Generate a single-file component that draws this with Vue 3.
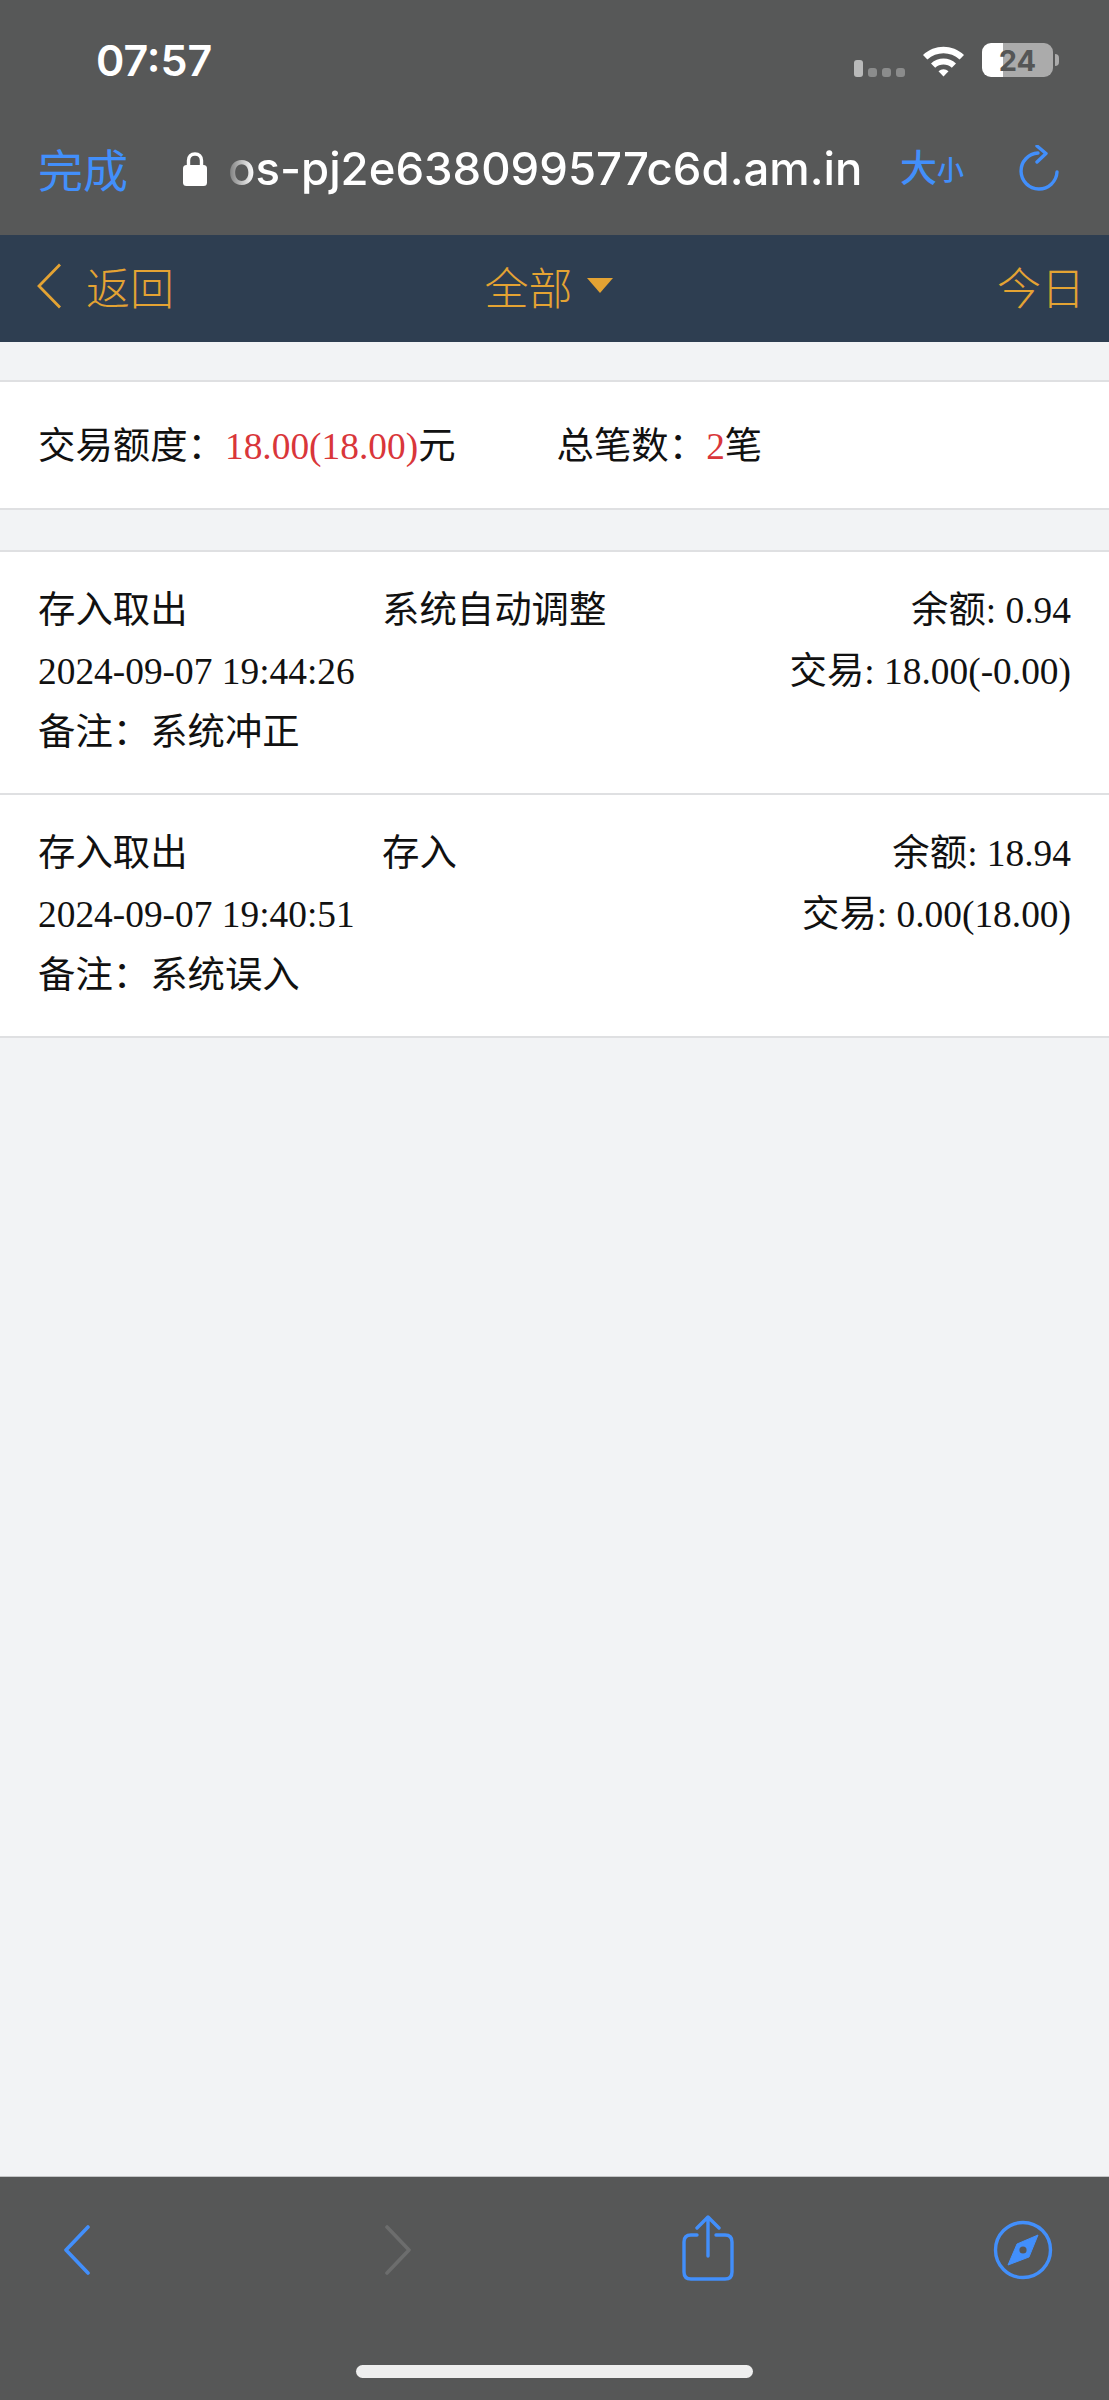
<template>
  <div class="screen">
    <header class="browser-top">
      <div class="status">
        <span class="status__time">07:57</span>
        <div class="status__icons">
          <span class="signal">
            <i class="signal__on"></i><i></i><i></i><i></i>
          </span>
          <svg class="wifi" viewBox="0 0 43 33">
            <path d="M1 11C12.500 0 30.500 0 42 11L37.600 15.600C28.500 7.200 14.500 7.200 5.400 15.600Z" fill="#fff" />
            <path d="M9 19.500C15.800 12.900 27.200 12.900 34 19.500L29.800 23.700C25.200 19.300 17.800 19.300 13.200 23.700Z" fill="#fff" />
            <path d="M16.500 27.300C19.600 24.500 23.400 24.500 26.500 27.300L21.500 32.500Z" fill="#fff" />
          </svg>
          <span class="battery"><span class="battery__text">24</span></span>
          <span class="battery__tip"></span>
        </div>
      </div>
      <div class="address">
        <span class="address__done">完成</span>
        <svg class="lock" viewBox="0 0 26 36">
          <path d="M6.500 16V9.500C6.500 5.500 9 3 13 3S19.500 5.500 19.500 9.500V16" fill="none" stroke="#fff" stroke-width="3.400" />
          <rect x="1" y="14" width="24" height="21" rx="3.500" fill="#fff" />
        </svg>
        <span class="address__url">os-pj2e638099577c6d.am.in</span>
        <span class="address__size">大<small>小</small></span>
        <svg class="reload" viewBox="0 0 40 48">
          <path d="M19 8A18 18 0 1 0 38 27" fill="none" stroke="#428ffb" stroke-width="3.400" stroke-linecap="round" />
          <path d="M18 1L27 8.500L18 17" fill="none" stroke="#428ffb" stroke-width="3.400" stroke-linecap="round" stroke-linejoin="round" />
        </svg>
      </div>
    </header>

    <nav class="nav">
      <div class="nav__back">
        <svg class="nav__chevron" viewBox="0 0 26 46">
          <path d="M24 1.500L3 23L24 44.500" fill="none" stroke="#e4a333" stroke-width="2.800" />
        </svg>
        <span>返回</span>
      </div>
      <div class="nav__title">
        <span>全部</span>
        <i class="nav__caret"></i>
      </div>
      <span class="nav__today">今日</span>
    </nav>

    <main class="content">
      <section class="summary">
        <p class="summary__item">
          交易额度：<span class="red">18.00(18.00)</span>元
        </p>
        <p class="summary__item">
          总笔数：<span class="red">2</span>笔
        </p>
      </section>

      <section class="records">
        <article v-for="(item, index) in records" :key="index" class="record">
          <div class="record__line">
            <span class="record__type">{{ item.type }}</span>
            <span class="record__action">{{ item.action }}</span>
            <span class="record__right">余额: {{ item.balance }}</span>
          </div>
          <div class="record__line">
            <span>{{ item.time }}</span>
            <span class="record__right">交易: {{ item.trade }}</span>
          </div>
          <div class="record__line">
            <span>备注：</span><span>{{ item.note }}</span>
          </div>
        </article>
      </section>
    </main>

    <footer class="browser-bottom">
      <div class="toolbar">
        <svg class="tool tool--chevron" viewBox="0 0 28 50">
          <path d="M25 2L3 25L25 48" fill="none" stroke="#428ffb" stroke-width="3.600" stroke-linecap="round" stroke-linejoin="round" />
        </svg>
        <svg class="tool tool--chevron tool--forward" viewBox="0 0 28 50">
          <path d="M3 2L25 25L3 48" fill="none" stroke="#6c6d6d" stroke-width="3.600" stroke-linecap="round" stroke-linejoin="round" />
        </svg>
        <svg class="tool tool--share" viewBox="0 0 52 66">
          <path d="M15 20H9C4.500 20 2 22.500 2 27V57C2 61.500 4.500 64 9 64H43C47.500 64 50 61.500 50 57V27C50 22.500 47.500 20 43 20H34" fill="none" stroke="#428ffb" stroke-width="3.400" stroke-linecap="round" />
          <path d="M26 41V2M15 13L26 2L37 13" fill="none" stroke="#428ffb" stroke-width="3.400" stroke-linecap="round" stroke-linejoin="round" />
        </svg>
        <svg class="tool tool--compass" viewBox="0 0 60 60">
          <circle cx="30" cy="30" r="27.500" fill="none" stroke="#428ffb" stroke-width="3.400" />
          <path d="M45 15L36 37L15 45L24 24Z" fill="#428ffb" stroke="#428ffb" stroke-width="1" stroke-linejoin="round" />
          <circle cx="30" cy="30" r="3.600" fill="#565757" />
        </svg>
      </div>
      <div class="home-bar"></div>
    </footer>
  </div>
</template>

<script setup>
const records = [
  {
    type: '存入取出',
    action: '系统自动调整',
    balance: '0.94',
    time: '2024-09-07 19:44:26',
    trade: '18.00(-0.00)',
    note: '系统冲正',
  },
  {
    type: '存入取出',
    action: '存入',
    balance: '18.94',
    time: '2024-09-07 19:40:51',
    trade: '0.00(18.00)',
    note: '系统误入',
  },
]
</script>

<style>
html,
body {
  margin: 0;
  background: #f2f3f5;
}
</style>

<style scoped>
.screen {
  display: flex;
  flex-direction: column;
  height: 2400px;
  overflow: hidden;
  font-family: "Liberation Serif", "Noto Sans CJK SC", serif;
  font-size: 37.4px;
  color: #111;
}

.browser-top {
  height: 235px;
  flex: none;
  background: #575858;
  color: #fff;
  font-family: Inter, "Noto Sans CJK SC", sans-serif;
}

.status {
  display: flex;
  align-items: center;
  justify-content: space-between;
  height: 120px;
  padding: 0 50px 0 96px;
}

.status__time {
  font-size: 43px;
  font-weight: 600;
}

.status__icons {
  display: flex;
  align-items: center;
}

.signal {
  display: flex;
  align-items: flex-end;
  gap: 5px;
  height: 33px;
  margin-right: 17px;
}

.signal i {
  width: 9px;
  height: 9px;
  border-radius: 3px;
  background: #8b8c8c;
}

.signal .signal__on {
  height: 17px;
  background: #b9baba;
}

.wifi {
  width: 43px;
  height: 33px;
  margin-right: 17px;
}

.battery {
  display: flex;
  align-items: center;
  justify-content: center;
  width: 71px;
  height: 34px;
  border-radius: 9px;
  background: linear-gradient(90deg, #fff 0 21px, #ababab 21px);
  color: #555656;
  font-size: 29px;
  font-weight: 700;
}

.battery__tip {
  width: 4px;
  height: 12px;
  margin-left: 2px;
  border-radius: 0 6px 6px 0;
  background: #ababab;
}

.address {
  display: flex;
  align-items: center;
  height: 75px;
  margin-top: 11px;
  padding: 0 50px 0 38px;
}

.address__done {
  width: 90px;
  margin-right: 54px;
  color: #428ffb;
  font-size: 45px;
}

.lock {
  width: 26px;
  height: 36px;
  margin-right: 20px;
}

.address__url {
  width: 644px;
  font-size: 45.5px;
  font-weight: 500;
  white-space: nowrap;
  -webkit-mask-image: linear-gradient(90deg, rgba(255, 255, 255, 0.2), #fff 26px);
  mask-image: linear-gradient(90deg, rgba(255, 255, 255, 0.2), #fff 26px);
}

.address__size {
  display: flex;
  align-items: flex-end;
  margin-left: 28px;
  color: #428ffb;
  font-size: 37px;
  font-weight: 500;
  line-height: 40px;
}

.address__size small {
  font-size: 27px;
  line-height: 36px;
}

.reload {
  width: 40px;
  height: 48px;
  margin-left: auto;
}

.nav {
  display: grid;
  grid-template-columns: 1fr auto 1fr;
  align-items: center;
  box-sizing: border-box;
  height: 107px;
  flex: none;
  padding: 0 24px 6px 36px;
  background: #2e3e51;
  color: #e4a333;
  font-family: "Noto Sans CJK SC", sans-serif;
  font-size: 44px;
  font-weight: 300;
}

.nav__back {
  display: flex;
  align-items: center;
  gap: 24px;
}

.nav__chevron {
  width: 26px;
  height: 46px;
}

.nav__title {
  display: flex;
  align-items: center;
  gap: 14px;
  padding-right: 24px;
}

.nav__caret {
  width: 0;
  height: 0;
  border-style: solid;
  border-width: 15px 13px 0;
  border-color: #e4a333 transparent transparent;
}

.nav__today {
  justify-self: end;
}

.content {
  flex: 1;
  padding-top: 38px;
  background: #f2f3f5;
}

.summary {
  display: flex;
  align-items: center;
  gap: 101px;
  box-sizing: border-box;
  height: 130px;
  padding: 2px 38px 0;
  background: #fff;
  border-top: 2px solid #dfe0e2;
  border-bottom: 2px solid #dfe0e2;
}

.summary__item {
  margin: 0;
  line-height: 61px;
}

.red {
  color: #d9363a;
}

.records {
  margin-top: 40px;
  background: #fff;
  border-top: 2px solid #dfe0e2;
}

.record {
  box-sizing: border-box;
  height: 243px;
  padding: 28px 38px 0;
  border-bottom: 2px solid #dfe0e2;
}

.record__line {
  display: flex;
  align-items: baseline;
  height: 61px;
  line-height: 61px;
  white-space: nowrap;
}

.record__type {
  width: 344px;
}

.record__right {
  margin-left: auto;
}

.browser-bottom {
  display: flex;
  flex-direction: column;
  height: 223px;
  flex: none;
  background: #565757;
  border-top: 1px solid #c4c5c6;
}

.toolbar {
  display: flex;
  align-items: flex-start;
  height: 94px;
  margin-top: 38px;
  padding-left: 63px;
}

.tool--chevron {
  width: 28px;
  height: 50px;
  margin-top: 10px;
}

.tool--forward {
  margin-left: 293px;
}

.tool--share {
  width: 52px;
  height: 66px;
  margin-left: 270px;
}

.tool--compass {
  width: 60px;
  height: 60px;
  margin-top: 5px;
  margin-left: 259px;
}

.home-bar {
  align-self: center;
  width: 397px;
  height: 13px;
  margin-top: 56px;
  border-radius: 7px;
  background: #eeeeee;
}
</style>
